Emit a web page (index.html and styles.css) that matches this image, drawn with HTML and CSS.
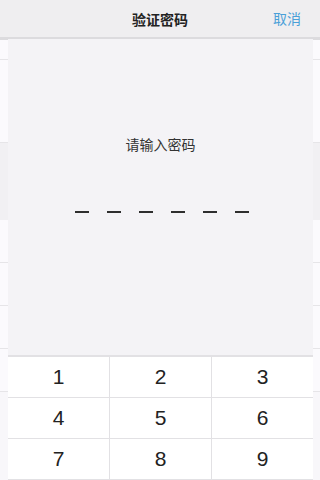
FILE: index.html
```html
<!DOCTYPE html>
<html lang="zh">
<head>
<meta charset="utf-8">
<link rel="stylesheet" href="styles.css">
</head>
<body>
<div class="page">
  <div class="nav">
    <span class="nav-title">验证密码</span>
    <span class="nav-cancel">取消</span>
  </div>
  <div class="bg-list">
    <div class="bg-row r1"></div>
    <div class="bg-row r2"></div>
    <div class="bg-band"></div>
    <div class="bg-row r3"></div>
    <div class="bg-row r3"></div>
    <div class="bg-row r3"></div>
    <div class="bg-row r3"></div>
  </div>
  <div class="sheet">
    <div class="prompt">请输入密码</div>
    <div class="dashes">
      <span class="dash"></span><span class="dash"></span><span class="dash"></span>
      <span class="dash"></span><span class="dash"></span><span class="dash"></span>
    </div>
    <div class="spacer"></div>
    <div class="keypad">
      <div class="key">1</div><div class="key">2</div><div class="key">3</div>
      <div class="key">4</div><div class="key">5</div><div class="key">6</div>
      <div class="key">7</div><div class="key">8</div><div class="key">9</div>
    </div>
  </div>
</div>
</body>
</html>
```
FILE: styles.css
```css
* { box-sizing: border-box; }
html, body { margin: 0; padding: 0; }
body {
  width: 320px;
  height: 480px;
  overflow: hidden;
  font-family: "Noto Sans CJK SC", "Liberation Sans", sans-serif;
  background: #f8f7fa;
}
.page {
  position: relative;
  width: 320px;
  height: 480px;
}
.nav {
  height: 37px;
  background: #efeef0;
  display: flex;
  align-items: center;
  justify-content: center;
  position: relative;
}
.nav-title {
  font-size: 14px;
  font-weight: 600;
  color: #222;
}
.nav-cancel {
  position: absolute;
  right: 19px;
  top: 8px;
  font-size: 14px;
  color: #4aa0d8;
}
.bg-list {
  display: flex;
  flex-direction: column;
  border-top: 3px solid #dcdbde;
}
.bg-row {
  background: #fbfafd;
  border-bottom: 1px solid #e6e5e8;
}
.r1 { height: 20px; }
.r2 { height: 83px; }
.bg-band { height: 77px; background: #f1f0f3; }
.r3 { height: 43px; }
.sheet {
  position: absolute;
  top: 37px;
  left: 8px;
  width: 305px;
  bottom: 0;
  background: #f4f3f6;
  border-top: 2px solid #dcdbde;
  display: flex;
  flex-direction: column;
  align-items: center;
}
.prompt {
  margin-top: 95px;
  font-size: 14px;
  color: #333;
  line-height: 20px;
}
.dashes {
  margin-top: 57px;
  display: flex;
  gap: 18px;
  margin-left: 2px;
}
.dash {
  display: block;
  width: 14px;
  height: 2px;
  background: #2e2e2e;
}
.spacer { flex: 1; }
.keypad {
  width: 100%;
  display: grid;
  grid-template-columns: 102px 102px 101px;
  grid-auto-rows: 41px;
  background: #fff;
  border-top: 2px solid #e2e1e4;
}
.key {
  display: flex;
  align-items: center;
  justify-content: center;
  font-family: "Liberation Sans", sans-serif;
  font-size: 21px;
  color: #222;
  border-right: 1px solid #e2e1e4;
  border-bottom: 1px solid #e2e1e4;
}
.key:nth-child(3n) { border-right: none; }
```
